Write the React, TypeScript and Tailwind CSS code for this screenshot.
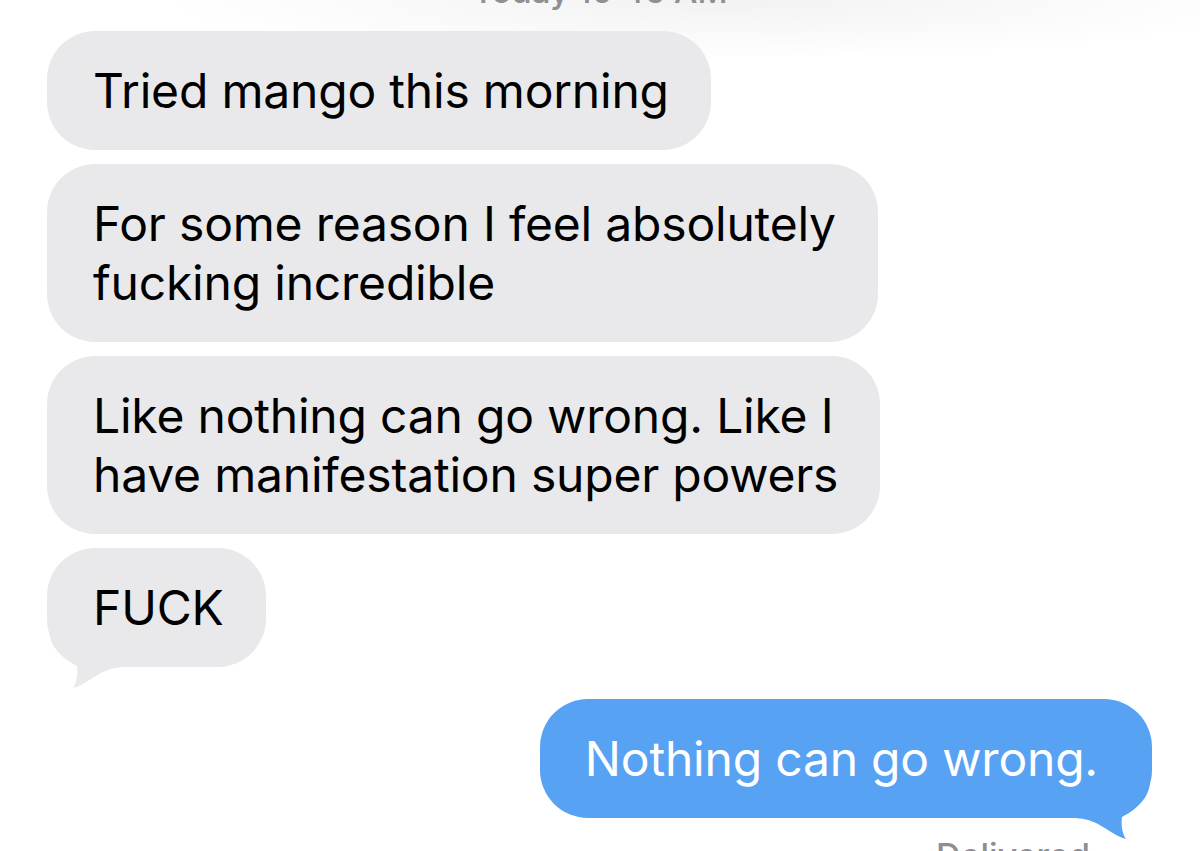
type Side = "in" | "out";

type Message = {
  id: number;
  side: Side;
  lines: string[];
  tail?: boolean;
};

const messages: Message[] = [
  { id: 1, side: "in", lines: ["Tried mango this morning"] },
  {
    id: 2,
    side: "in",
    lines: ["For some reason I feel absolutely", "fucking incredible"],
  },
  {
    id: 3,
    side: "in",
    lines: ["Like nothing can go wrong. Like I", "have manifestation super powers"],
  },
  { id: 4, side: "in", lines: ["FUCK"], tail: true },
];

function Tail({ side }: { side: Side }) {
  const fill = side === "in" ? "#e9e9eb" : "#58a2f4";
  return (
    <svg
      width="80"
      height="60"
      viewBox="0 0 80 60"
      className={
        side === "in"
          ? "absolute left-0 -bottom-[25px]"
          : "absolute right-0 -bottom-[25px] -scale-x-100"
      }
    >
      <path
        d="M2 0 C3 12 11 24 30 34 C31 42 30 50 26 56 C34 54 44 47 54 41 C62 37 70 35 80 35 L80 0 Z"
        fill={fill}
      />
    </svg>
  );
}

function Bubble({ message }: { message: Message }) {
  const isIn = message.side === "in";
  return (
    <div
      className={
        isIn
          ? "relative w-fit rounded-[48px] bg-[#e9e9eb] pl-[46px] pr-[42px] py-[30px] text-black"
          : "relative w-fit rounded-[48px] bg-[#58a2f4] pl-[45px] pr-[54px] py-[30px] text-white"
      }
    >
      <div className="relative z-10 text-[48px] leading-[59px] tracking-[-0.2px] whitespace-nowrap">
        {message.lines.map((line, i) => (
          <div key={i}>{line}</div>
        ))}
      </div>
      {message.tail && <Tail side={message.side} />}
    </div>
  );
}

export default function App() {
  return (
    <div
      className="relative h-[851px] w-[1200px] overflow-hidden bg-white bg-[radial-gradient(ellipse_560px_60px_at_60%_0%,#f2f2f2_0%,#ffffff_100%)]"
      style={{ fontFamily: "Inter, 'Liberation Sans', sans-serif" }}
    >
      <div className="-mt-[29px] mb-[20px] text-center text-[33px] leading-[40px] font-medium text-[#8e8e93]">
        Today 10:46 AM
      </div>

      <div className="flex flex-col gap-[14px] pl-[47px]">
        {messages.map((m) => (
          <Bubble key={m.id} message={m} />
        ))}
      </div>

      <div className="mt-[32px] flex justify-end pr-[48px]">
        <Bubble
          message={{ id: 5, side: "out", lines: ["Nothing can go wrong."], tail: true }}
        />
      </div>

      <div className="mt-[18px] pr-[110px] text-right text-[34px] leading-[40px] font-medium text-[#8e8e93]">
        Delivered
      </div>
    </div>
  );
}
